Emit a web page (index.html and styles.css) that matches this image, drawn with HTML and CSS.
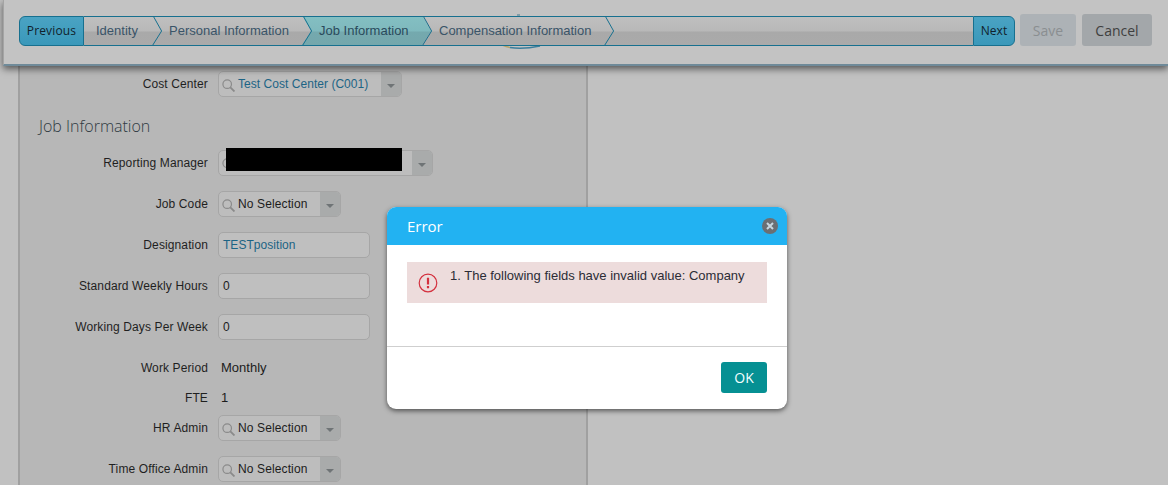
FILE: index.html
```html
<!DOCTYPE html>
<html lang="en">
<head>
<meta charset="utf-8">
<title>Job Information</title>
<link rel="stylesheet" href="styles.css">
</head>
<body>
<svg class="icon-defs" width="0" height="0" aria-hidden="true">
  <symbol id="search" viewBox="0 0 14 14">
    <circle cx="5.6" cy="5.6" r="4.6" fill="none" stroke="#8a8a8a" stroke-width="1.3"/>
    <path d="M9 9L13.4 13.4" stroke="#8a8a8a" stroke-width="2" fill="none"/>
  </symbol>
  <symbol id="chev" viewBox="0 0 10 30" preserveAspectRatio="none">
    <path d="M1.2 0L9.6 15L0.2 30" fill="none" stroke="#17708f" stroke-width="1"/>
  </symbol>
</svg>

<header class="topbar">
  <svg class="logo-peek" width="40" height="36" viewBox="0 0 40 36" aria-hidden="true">
    <path d="M15 1h3" stroke="#6f929f" stroke-width="1.5"/>
    <path d="M0 31q4 2 8 2.5" stroke="#b5a368" stroke-width="1.4" fill="none"/>
    <path d="M8 33.5q13 2 30-1.5" stroke="#3b7e9c" stroke-width="1.6" fill="none"/>
  </svg>
  <nav class="wizard">
    <button class="wiz-btn wiz-prev">Previous</button>
    <div class="steps">
      <div class="step step-first">Identity<svg class="chev" aria-hidden="true"><use href="#chev"/></svg></div>
      <div class="step step-personal">Personal Information<svg class="chev" aria-hidden="true"><use href="#chev"/></svg></div>
      <div class="step step-job">Job Information<svg class="chev" aria-hidden="true"><use href="#chev"/></svg></div>
      <div class="step step-comp">Compensation Information<svg class="chev" aria-hidden="true"><use href="#chev"/></svg></div>
    </div>
    <button class="wiz-btn wiz-next">Next</button>
  </nav>
  <button class="act act-save">Save</button>
  <button class="act act-cancel">Cancel</button>
</header>

<main class="content">
  <section class="panel">
    <div class="row">
      <label class="lbl">Cost Center</label>
      <div class="combo combo-cost">
        <svg class="mag"><use href="#search"/></svg>
        <span class="combo-val link">Test Cost Center (C001)</span>
        <span class="combo-arrow"></span>
      </div>
    </div>

    <h2 class="heading">Job Information</h2>

    <div class="row">
      <label class="lbl">Reporting Manager</label>
      <div class="combo combo-mgr">
        <svg class="mag"><use href="#search"/></svg>
        <span class="combo-val"></span>
        <span class="combo-arrow"></span>
        <span class="redact"></span>
      </div>
    </div>
    <div class="row">
      <label class="lbl">Job Code</label>
      <div class="combo combo-short">
        <svg class="mag"><use href="#search"/></svg>
        <span class="combo-val">No Selection</span>
        <span class="combo-arrow"></span>
      </div>
    </div>
    <div class="row">
      <label class="lbl">Designation</label>
      <div class="input link">TESTposition</div>
    </div>
    <div class="row">
      <label class="lbl">Standard Weekly Hours</label>
      <div class="input">0</div>
    </div>
    <div class="row">
      <label class="lbl">Working Days Per Week</label>
      <div class="input">0</div>
    </div>
    <div class="row row-tight">
      <label class="lbl">Work Period</label>
      <div class="plain">Monthly</div>
    </div>
    <div class="row row-tight">
      <label class="lbl">FTE</label>
      <div class="plain">1</div>
    </div>
    <div class="row">
      <label class="lbl">HR Admin</label>
      <div class="combo combo-short">
        <svg class="mag"><use href="#search"/></svg>
        <span class="combo-val">No Selection</span>
        <span class="combo-arrow"></span>
      </div>
    </div>
    <div class="row">
      <label class="lbl">Time Office Admin</label>
      <div class="combo combo-short">
        <svg class="mag"><use href="#search"/></svg>
        <span class="combo-val">No Selection</span>
        <span class="combo-arrow"></span>
      </div>
    </div>
  </section>
</main>

<div class="dialog" role="dialog">
  <div class="dlg-head">
    <span class="dlg-title">Error</span>
    <span class="dlg-close">
      <svg width="14" height="14" viewBox="0 0 14 14" aria-hidden="true"><path d="M4 4l6 6M10 4l-6 6" stroke="#c8d7e0" stroke-width="2"/></svg>
    </span>
  </div>
  <div class="dlg-body">
    <div class="alert">
      <svg class="alert-icon" width="20" height="20" viewBox="0 0 20 20" aria-hidden="true">
        <circle cx="10" cy="10" r="8.8" fill="none" stroke="#d4313f" stroke-width="1.2"/>
        <path d="M10 4.8v6.6" stroke="#d4313f" stroke-width="2.2"/>
        <path d="M10 13v2.2" stroke="#d4313f" stroke-width="2.2"/>
      </svg>
      <span class="alert-text">1. The following fields have invalid value: Company</span>
    </div>
  </div>
  <div class="dlg-foot">
    <button class="ok">OK</button>
  </div>
</div>
</body>
</html>
```
FILE: styles.css
```css
* { box-sizing: border-box; }
html, body { margin: 0; height: 100%; }
body {
  width: 1168px;
  height: 485px;
  overflow: hidden;
  background: #c1c1c1;
  font-family: "Liberation Sans", Arial, sans-serif;
  font-size: 12px;
  letter-spacing: .12px;
  color: #1c1c1c;
  position: relative;
}
.icon-defs { position: absolute; }

.topbar {
  position: relative;
  z-index: 2;
  height: 66px;
  margin-left: 3px;
  padding: 14px 0 0 15px;
  display: flex;
  align-items: flex-start;
  background: #c3c3c3;
  border-left: 1px solid #a4a4a4;
  border-bottom: 2px solid #6f8a99;
  box-shadow: 0 3px 7px rgba(0, 0, 0, .55);
}
.logo-peek { position: absolute; left: 498px; top: 14px; }
.wizard {
  position: relative;
  flex: none;
  display: flex;
  width: 996px;
  height: 30px;
  margin-top: 2px;
}
.wiz-btn {
  padding: 0 0 2px;
  font: 12px "Open Sans", sans-serif;
  color: #10222c;
  border: 1px solid #17708f;
  background: linear-gradient(#4aa3c3 0, #3a98ba 100%);
}
.wiz-prev { width: 65px; border-radius: 6px 0 0 6px; letter-spacing: .15px; }
.wiz-next { width: 42px; border-radius: 0 6px 6px 0; }
.steps {
  flex: 1;
  display: flex;
  border-top: 1px solid #17708f;
  border-bottom: 1px solid #17708f;
  background: linear-gradient(#bfbfbf 0, #b8b8b8 14px, #a9a9a9 15px, #aaa 100%);
}
.step {
  position: relative;
  display: flex;
  align-items: center;
  font-size: 13px;
  letter-spacing: 0;
  color: #3a5468;
  white-space: nowrap;
  padding-bottom: 2px;
}
.chev {
  position: absolute;
  top: -1px;
  right: -10px;
  width: 10px;
  height: 30px;
  z-index: 1;
}
.step-first { width: 68px; padding-left: 12px; }
.step-personal { width: 150px; padding-left: 17px; }
.step-job {
  z-index: 0;
  width: 120px;
  padding-left: 17px;
  color: #2a4a5c;
}
.step-job::before {
  content: "";
  position: absolute;
  z-index: -1;
  top: 0;
  bottom: 0;
  left: 0;
  right: -10px;
  background: linear-gradient(#83bfc2 0, #7fb9bd 14px, #74a9ae 15px, #75a7ac 100%);
  clip-path: polygon(1px 0, calc(100% - 9px) 0, calc(100% - 1px) 50%, calc(100% - 10px) 100%, 0 100%, 9px 50%);
}
.step-comp { width: 182px; padding-left: 17px; }

.act {
  flex: none;
  height: 32px;
  margin-left: 5px;
  padding: 0;
  border: 0;
  border-radius: 3px;
  font: 14px "Open Sans", sans-serif;
}
.act-save { width: 56px; background: #adb2b6; color: #8a8e91; }
.act-cancel { width: 70px; margin-left: 6px; background: #a3a7aa; color: #3f3f3f; }

.content { padding-left: 18px; }
.panel {
  width: 570px;
  height: 419px;
  padding-top: 5px;
  background: #b7b7b7;
  border-left: 2px solid #a0a0a0;
  border-right: 2px solid #a0a0a0;
}
.row {
  display: flex;
  align-items: center;
  height: 26px;
  margin-bottom: 15px;
}
.row-tight { margin-bottom: 4px; }
.lbl {
  width: 188px;
  margin-right: 10px;
  text-align: right;
  color: #1f1f1f;
}
.heading {
  margin: 16px 0 11px 19px;
  height: 26px;
  font: 300 16px/26px "Open Sans", sans-serif;
  letter-spacing: 0;
  color: #2f3a42;
}
.combo {
  position: relative;
  display: flex;
  align-items: center;
  height: 26px;
  background: #bdbdbd;
  border: 1px solid #a6a6a6;
  border-radius: 5px;
}
.combo-cost { width: 184px; }
.combo-mgr { width: 215px; }
.combo-short { width: 123px; }
.mag { width: 13px; height: 13px; margin: 2px 0 0 3px; flex: none; }
.combo-val { flex: 1; padding-left: 3px; white-space: nowrap; color: #1c1c1c; }
.combo-val.link, .link { color: #1c6485; letter-spacing: .04px; }
.combo-arrow {
  position: relative;
  width: 20px;
  height: 24px;
  flex: none;
  background: #a9abab;
  border-radius: 0 4px 4px 0;
}
.combo-arrow::after {
  content: "";
  position: absolute;
  left: 6px;
  top: 12px;
  border: 4px solid transparent;
  border-top: 4px solid #6f7476;
  border-bottom: 0;
}
.redact {
  position: absolute;
  left: 7px;
  top: -3px;
  width: 176px;
  height: 23px;
  background: #000;
}
.input {
  width: 152px;
  height: 26px;
  line-height: 24px;
  padding-left: 4px;
  background: #bfbfbf;
  border: 1px solid #a6a6a6;
  border-radius: 5px;
}
.plain { padding: 0 0 2px 3px; font-size: 13px; letter-spacing: 0; }

.dialog {
  position: absolute;
  z-index: 5;
  left: 387px;
  top: 207px;
  width: 400px;
  height: 202px;
  display: flex;
  flex-direction: column;
  background: #fff;
  border-radius: 9px;
  box-shadow: 0 2px 5px rgba(0, 0, 0, .55);
  overflow: hidden;
  letter-spacing: 0;
}
.dlg-head {
  height: 38px;
  flex: none;
  display: flex;
  align-items: center;
  justify-content: space-between;
  padding: 0 9px 0 20px;
  background: #22b2f2;
}
.dlg-title { font: 15px "Open Sans", sans-serif; color: #fff; }
.dlg-close {
  width: 16px;
  height: 16px;
  border-radius: 50%;
  background: #6b6f73;
  display: flex;
  align-items: center;
  justify-content: center;
}
.dlg-body { flex: 1; padding: 17px 20px 0; }
.alert {
  display: flex;
  align-items: flex-start;
  height: 41px;
  padding: 0 0 0 11px;
  background: #eddcdc;
}
.alert-icon { margin-top: 11px; flex: none; }
.alert-text { margin: 6px 0 0 12px; font-size: 13px; color: #2c2c36; }
.dlg-foot {
  height: 63px;
  flex: none;
  display: flex;
  justify-content: flex-end;
  align-items: flex-start;
  padding: 15px 20px 0;
  border-top: 1px solid #cfcfcf;
}
.ok {
  width: 46px;
  height: 31px;
  padding: 0;
  border: 0;
  border-radius: 3px;
  background: #069093;
  color: #f4ffff;
  font: 14px "Open Sans", sans-serif;
}
```
